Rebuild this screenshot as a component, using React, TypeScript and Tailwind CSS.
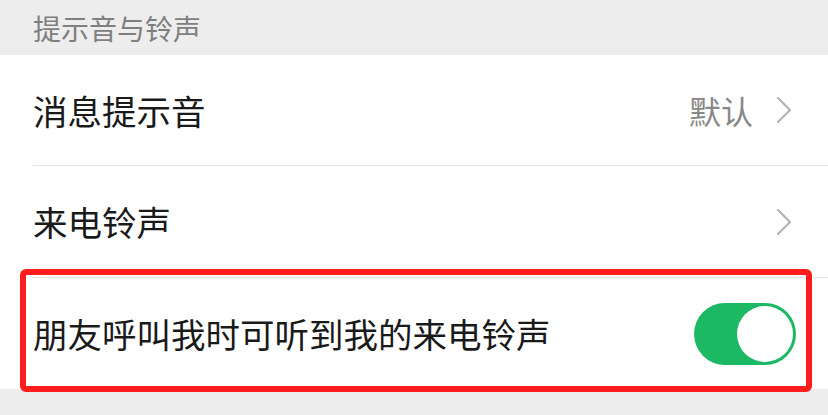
import React from "react";

const font = { fontFamily: '"Noto Sans CJK SC", "Noto Sans", sans-serif' };

function Chevron() {
  return (
    <svg width="18" height="28" viewBox="0 0 18 28" fill="none" className="shrink-0">
      <path d="M3 2 L15 14 L3 26" stroke="#b3b3b3" strokeWidth="2.2" strokeLinecap="round" strokeLinejoin="round" />
    </svg>
  );
}

export default function App() {
  return (
    <div className="w-[828px] h-[415px] bg-[#ededed] overflow-hidden" style={font}>
      <div className="h-[55px] flex items-center pl-[33px] text-[28px] text-[#7f7f7f] leading-none">
        提示音与铃声
      </div>
      <div className="bg-white">
        <div className="h-[110px] flex items-center pl-[33px] pr-[35px]">
          <span className="flex-1 text-[34.5px] text-[#1a1a1a] leading-none">消息提示音</span>
          <span className="text-[32px] text-[#888888] leading-none mr-[22px]">默认</span>
          <Chevron />
        </div>
        <div className="ml-[33px] h-px bg-[#e6e6e6]" />
        <div className="h-[111px] flex items-center pl-[33px] pr-[35px]">
          <span className="flex-1 text-[34.5px] text-[#1a1a1a] leading-none">来电铃声</span>
          <Chevron />
        </div>
        <div className="ml-[33px] h-px bg-[#e6e6e6]" />
        <div className="relative h-[111px] flex items-center pl-[33px] pr-[32px]">
          <span className="flex-1 text-[34.5px] text-[#1a1a1a] leading-none">朋友呼叫我时可听到我的来电铃声</span>
          <div className="w-[102px] h-[62px] rounded-full bg-[#1db864] p-[3px] flex justify-end">
            <div className="w-[56px] h-[56px] rounded-full bg-white" />
          </div>
          <div className="absolute left-[20px] top-[-9px] w-[792px] h-[123px] border-[6px] border-[#ff1c1c] rounded-[6px] pointer-events-none" />
        </div>
      </div>
    </div>
  );
}
